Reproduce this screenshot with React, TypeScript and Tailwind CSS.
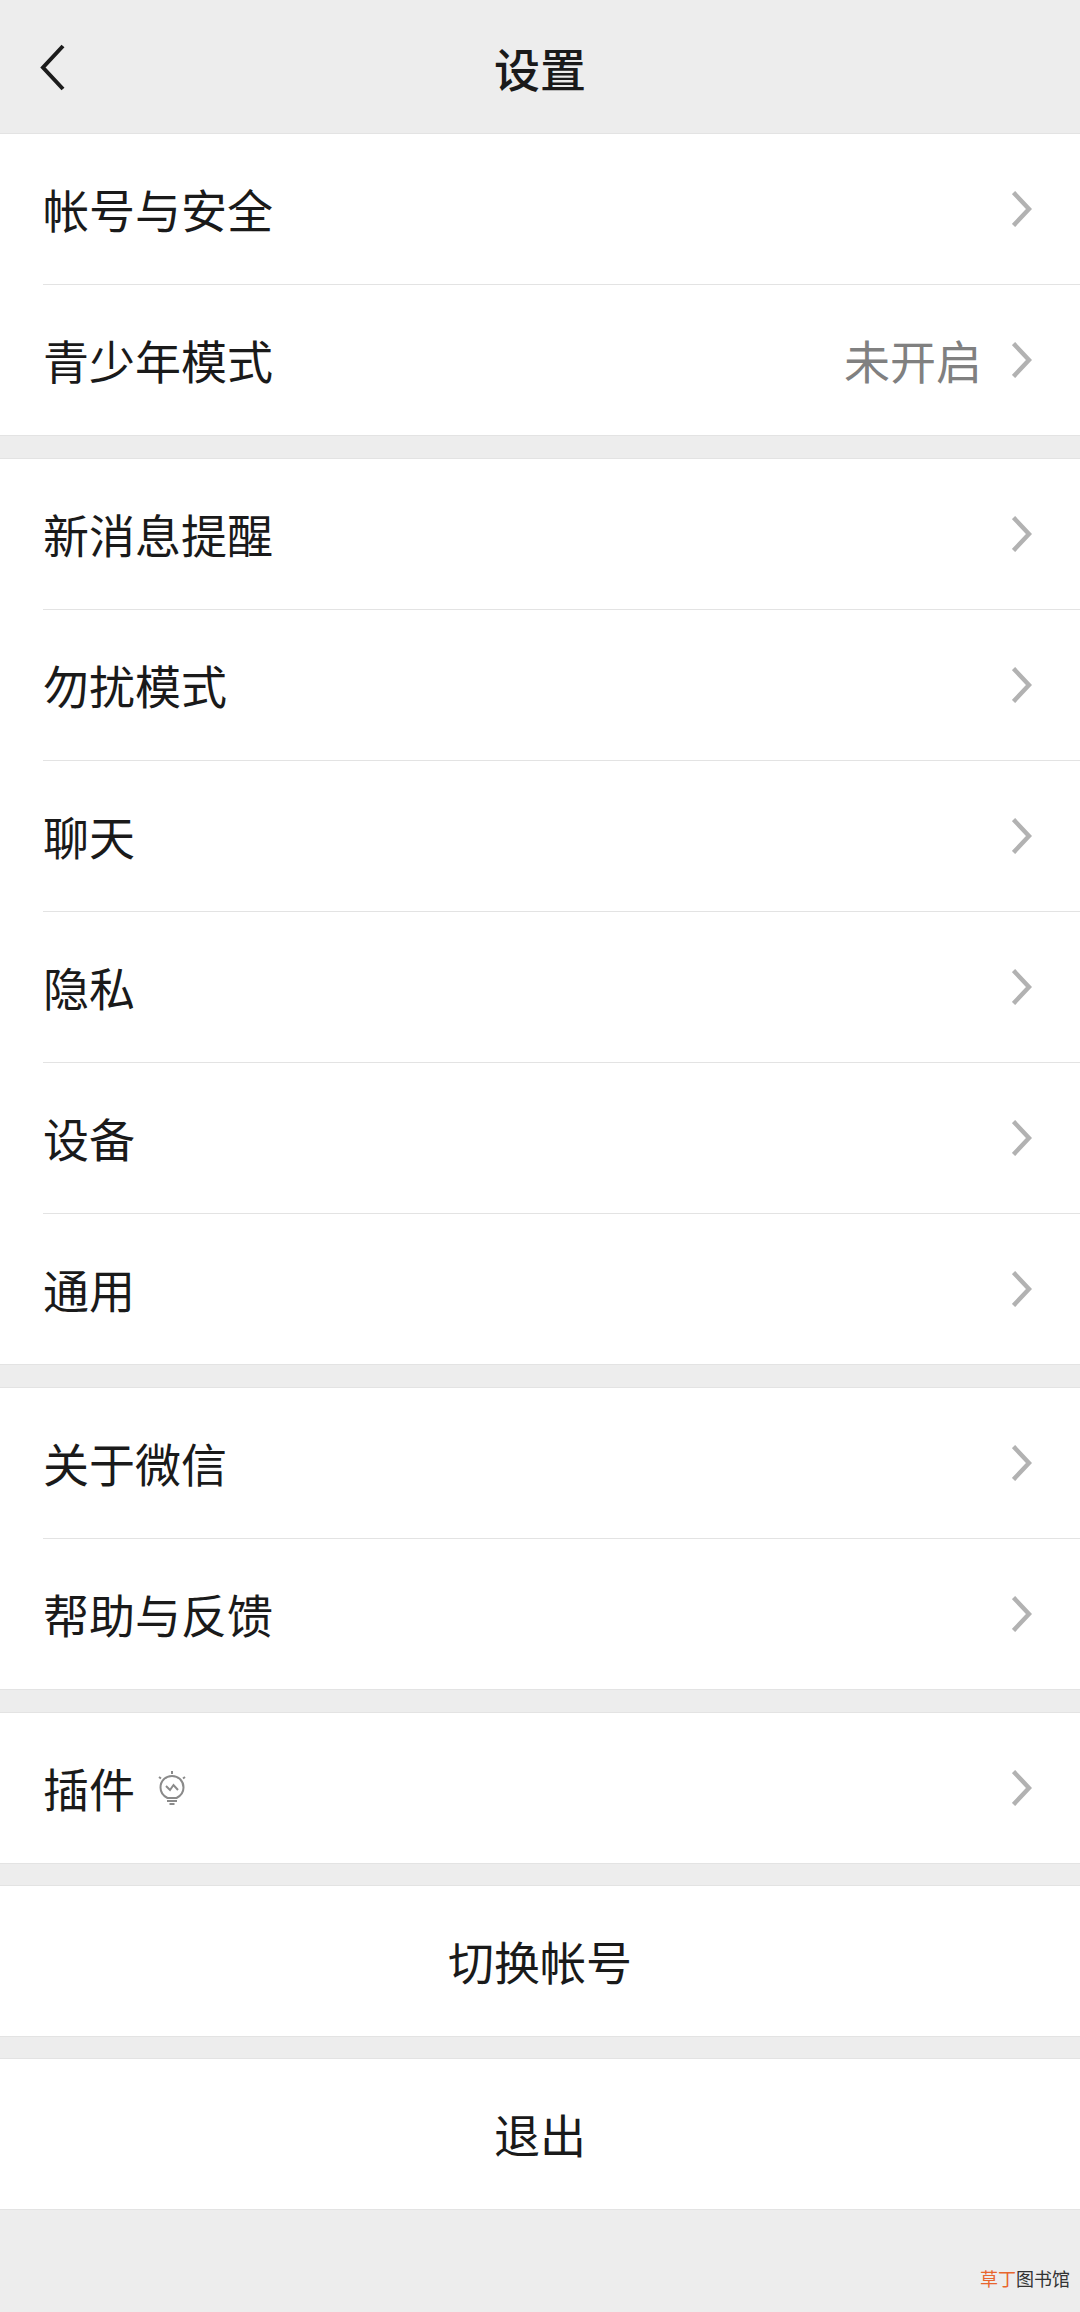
import type { ReactNode } from 'react'

const font = "font-['Noto_Sans_CJK_SC','Noto_Sans',sans-serif]"

function Chevron() {
  return (
    <svg width="20" height="36" viewBox="0 0 20 36" fill="none" className="shrink-0">
      <path d="M1.500 1.500 L17 18 L1.500 34.500" stroke="#b2b2b2" strokeWidth="4.500" />
    </svg>
  )
}

function BackArrow() {
  return (
    <svg width="26" height="48" viewBox="0 0 26 48" fill="none">
      <path d="M24 2 L4 23.500 L24 45" stroke="#1c1c1c" strokeWidth="4" />
    </svg>
  )
}

function PluginBulb() {
  return (
    <svg width="28" height="34" viewBox="0 0 28 34" fill="none" stroke="#8a8a8a" strokeWidth="2" className="ml-[23px]">
      <path d="M14 0 v3 M1 6 l2 1.500 M27 6 l-2 1.500" />
      <path d="M9.500 27 C5.500 25 2.500 21 2.500 16.500 C2.500 10 7.500 5 14 5 C20.500 5 25.500 10 25.500 16.500 C25.500 21 22.500 25 18.500 27 Z" />
      <path d="M8 15 L12 19 L15.500 14 L20 19" />
      <path d="M9 30 h10 M11.500 33 h5" />
    </svg>
  )
}

function Row({ label, value, extra, divider }: { label: string; value?: string; extra?: ReactNode; divider?: boolean }) {
  return (
    <div className="pl-[43px]">
      <div className={`flex items-center pr-[48px] ${divider ? 'h-[151px] border-b border-[#e3e3e3]' : 'h-[150px]'}`}>
        <span className="pb-[3px] text-[46px] leading-none text-[#1a1a1a]">{label}</span>
        {extra}
        <div className="flex-1" />
        {value && <span className="mr-[30px] pb-[3px] text-[46px] leading-none text-[#808080]">{value}</span>}
        <Chevron />
      </div>
    </div>
  )
}

function Section({ children, gap = true }: { children: ReactNode; gap?: boolean }) {
  return <div className={`border-y border-[#e3e3e3] bg-white ${gap ? 'mt-[22px]' : ''}`}>{children}</div>
}

function ActionButton({ label }: { label: string }) {
  return (
    <div className="mt-[21px] border-y border-[#e3e3e3] bg-white">
      <div className="flex h-[150px] items-center justify-center pb-[3px] text-[46px] leading-none text-[#1a1a1a]">{label}</div>
    </div>
  )
}

export default function App() {
  return (
    <div className={`relative h-[2312px] w-[1080px] overflow-hidden bg-[#ededed] ${font}`}>
      {/* header */}
      <div className="relative flex h-[133px] items-center justify-center">
        <div className="absolute left-[39px] top-[44px]">
          <BackArrow />
        </div>
        <h1 className="text-[46px] font-medium leading-none text-[#1a1a1a]">设置</h1>
      </div>

      <Section gap={false}>
        <Row label="帐号与安全" divider />
        <Row label="青少年模式" value="未开启" />
      </Section>

      <Section>
        <Row label="新消息提醒" divider />
        <Row label="勿扰模式" divider />
        <Row label="聊天" divider />
        <Row label="隐私" divider />
        <Row label="设备" divider />
        <Row label="通用" />
      </Section>

      <Section>
        <Row label="关于微信" divider />
        <Row label="帮助与反馈" />
      </Section>

      <Section>
        <Row label="插件" extra={<PluginBulb />} />
      </Section>

      <ActionButton label="切换帐号" />
      <ActionButton label="退出" />

      {/* watermark */}
      <div className="absolute bottom-[25px] right-[10px] text-[18px] leading-none text-[#333333]">
        <span className="text-[#e8662e]">草丁</span>图书馆
      </div>
    </div>
  )
}
